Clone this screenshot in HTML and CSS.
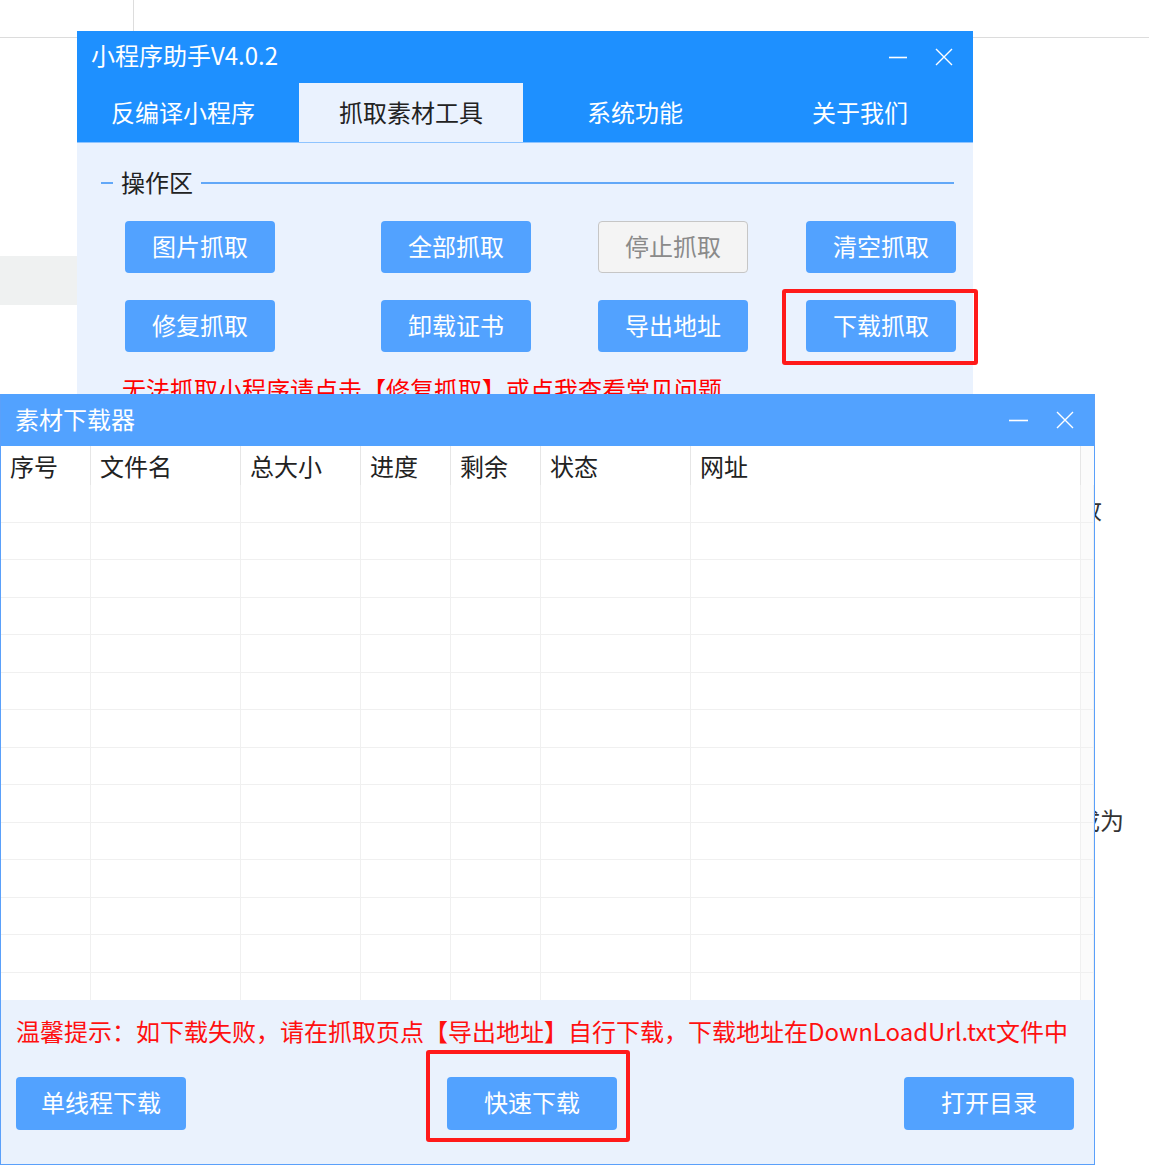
FILE: index.html
```html
<!DOCTYPE html>
<html lang="zh-CN">
<head>
    <meta charset="UTF-8">
    <title>小程序助手V4.0.2</title>
    <meta name="viewport" content="width=device-width, initial-scale=1.0">
    <link rel="stylesheet" href="styles.css">
</head>
<body>
    <!-- page behind the windows -->
    <div class="desk">
        <div class="desk-vline"></div>
        <div class="desk-hline"></div>
        <div class="desk-band"></div>
        <span class="desk-text desk-text-1">收</span>
        <span class="desk-text desk-text-2">成为</span>
    </div>

    <!-- Main window -->
    <div class="main-win">
        <div class="title-bar">
            <span class="title">小程序助手V4.0.2</span>
            <div class="win-ctrl">
                <svg width="18" height="18" viewBox="0 0 18 18"><path d="M0 9.5H18" stroke="#fff" stroke-width="1.6"/></svg>
                <svg width="18" height="18" viewBox="0 0 18 18"><path d="M1 1L17 17M17 1L1 17" stroke="#fff" stroke-width="1.4"/></svg>
            </div>
        </div>
        <div class="tabs">
            <div class="tab">反编译小程序</div>
            <div class="tab active">抓取素材工具</div>
            <div class="tab">系统功能</div>
            <div class="tab">关于我们</div>
        </div>
        <div class="op-area">
            <div class="legend">
                <span class="legend-line short"></span>
                <span class="legend-text">操作区</span>
                <span class="legend-line"></span>
            </div>
            <div class="btn-grid">
                <button class="btn">图片抓取</button>
                <button class="btn">全部抓取</button>
                <button class="btn disabled">停止抓取</button>
                <button class="btn">清空抓取</button>
                <button class="btn">修复抓取</button>
                <button class="btn">卸载证书</button>
                <button class="btn">导出地址</button>
                <button class="btn">下载抓取</button>
            </div>
            <p class="warn">无法抓取小程序请点击【修复抓取】或点我查看常见问题</p>
        </div>
    </div>

    <!-- Downloader window -->
    <div class="dl-win">
        <div class="title-bar light">
            <span class="title">素材下载器</span>
            <div class="win-ctrl">
                <svg width="19" height="18" viewBox="0 0 19 18"><path d="M0 9.5H19" stroke="#fff" stroke-width="1.6"/></svg>
                <svg width="18" height="18" viewBox="0 0 18 18"><path d="M1 1L17 17M17 1L1 17" stroke="#fff" stroke-width="1.4"/></svg>
            </div>
        </div>
        <div class="list">
            <div class="list-row head">
                <div class="cell">序号</div>
                <div class="cell">文件名</div>
                <div class="cell">总大小</div>
                <div class="cell">进度</div>
                <div class="cell">剩余</div>
                <div class="cell">状态</div>
                <div class="cell">网址</div>
                <div class="cell"></div>
            </div>
            <div id="rows"></div>
        </div>
        <div class="dl-foot">
            <p class="tip">温馨提示：如下载失败，请在抓取页点【导出地址】自行下载，下载地址在DownLoadUrl.txt文件中</p>
            <div class="foot-btns">
                <button class="btn big">单线程下载</button>
                <button class="btn big">快速下载</button>
                <button class="btn big">打开目录</button>
            </div>
        </div>
    </div>

    <!-- red marks over the screenshot -->
    <div class="mark mark-1"></div>
    <div class="mark mark-2"></div>

    <script>
        // empty list rows
        var rows = document.getElementById('rows');
        for (var i = 0; i < 14; i++) {
            var row = document.createElement('div');
            row.className = 'list-row';
            for (var j = 0; j < 8; j++) {
                var cell = document.createElement('div');
                cell.className = 'cell';
                row.appendChild(cell);
            }
            rows.appendChild(row);
        }
    </script>
</body>
</html>
```

FILE: styles.css
```css
* {
    box-sizing: border-box;
}
body {
    margin: 0;
    width: 1149px;
    height: 1167px;
    overflow: hidden;
    position: relative;
    background: #fff;
    font-family: "Noto Sans CJK SC", "Microsoft YaHei", sans-serif;
    color: #222;
}
p {
    margin: 0;
}

/* page behind */
.desk-vline {
    position: absolute;
    left: 133px;
    top: 0;
    width: 1px;
    height: 31px;
    background: #ddd;
}
.desk-hline {
    position: absolute;
    left: 0;
    top: 37px;
    width: 1149px;
    height: 1px;
    background: #dcdcdc;
}
.desk-band {
    position: absolute;
    left: 0;
    top: 256px;
    width: 77px;
    height: 49px;
    background: #eff1f1;
}
.desk-text {
    position: absolute;
    font-size: 24px;
    line-height: 30px;
    color: #333;
}
.desk-text-1 {
    left: 1078px;
    top: 494px;
}
.desk-text-2 {
    left: 1076px;
    top: 805px;
}

/* windows */
.main-win {
    position: absolute;
    left: 77px;
    top: 31px;
    width: 896px;
    height: 420px;
    background: #eaf2fe;
}
.title-bar {
    height: 52px;
    display: flex;
    align-items: center;
    padding: 0 20px 0 14px;
    background: #1e90ff;
    color: #fff;
    font-size: 24px;
}
.title {
    margin-top: -5px;
}
.title-bar.light {
    background: #52a2ff;
}
.title-bar.light .title {
    margin-top: -4px;
}
.win-ctrl {
    margin-left: auto;
    display: flex;
    align-items: center;
    gap: 28px;
}
.win-ctrl svg {
    display: block;
}
.tabs {
    display: grid;
    grid-template-columns: 222px 224px 224px 1fr;
    height: 60px;
    background: #1e90ff;
    border-bottom: 1px solid #8ec4ff;
}
.tab {
    display: flex;
    align-items: center;
    justify-content: center;
    padding-bottom: 3px;
    color: #fff;
    font-size: 24px;
}
.tab:first-child {
    padding-right: 10px;
}
.tab.active {
    background: #eaf2fe;
    color: #222;
}

.op-area {
    padding: 27px 19px 0 24px;
}
.legend {
    display: flex;
    align-items: center;
    gap: 8px;
    height: 26px;
}
.legend-line {
    flex: 1;
    height: 1.5px;
    background: #62a8f8;
}
.legend-line.short {
    flex: 0 0 12px;
}
.legend-text {
    font-size: 24px;
    line-height: 26px;
    margin-top: -2px;
    color: #222;
}
.btn-grid {
    display: grid;
    grid-template-columns: 256px 217px 208px 150px;
    grid-auto-rows: 52px;
    row-gap: 27px;
    margin: 25px 0 0 24px;
}
.btn {
    width: 150px;
    height: 52px;
    border: none;
    border-radius: 4px;
    background: #52a2ff;
    color: #fff;
    font-family: inherit;
    font-size: 24px;
    padding: 0 0 4px;
}
.btn.disabled {
    background: #f4f4f4;
    border: 1px solid #c6c6c6;
    color: #8a8a8a;
}
.btn.big {
    width: 170px;
    height: 53px;
}
.warn {
    margin: 21px 0 0 21px;
    font-size: 24px;
    line-height: 32px;
    color: #ff0000;
    white-space: nowrap;
}

.dl-win {
    position: absolute;
    left: 0;
    top: 394px;
    width: 1095px;
    height: 771px;
    display: flex;
    flex-direction: column;
    background: #eaf2fd;
    border: 1px solid #5aa0fa;
    border-top: none;
}
.list {
    height: 554px;
    overflow: hidden;
    background: #fff;
}
.list-row {
    display: grid;
    grid-template-columns: 90px 150px 120px 90px 90px 150px 390px 1fr;
    height: 37.5px;
}
.list-row .cell {
    border-right: 1px solid #f0f0f0;
    border-bottom: 1px solid #f0f0f0;
}
.list-row.head {
    height: 39px;
}
.list-row.head .cell {
    border-bottom: none;
    border-right: 1px solid #e6e6e6;
    padding: 5px 0 0 9px;
    font-size: 24px;
    line-height: 30px;
    color: #222;
}
.list-row.head .cell:last-child {
    border-right: none;
}
.list-row .cell:last-child {
    background: #fbfbfb;
}

.dl-foot {
    flex: 1;
    padding: 15px 19px 0 15px;
}
.tip {
    font-size: 24px;
    line-height: 32px;
    color: #ff1010;
    white-space: nowrap;
}
.foot-btns {
    display: grid;
    grid-template-columns: 431px 457px 170px;
    margin-top: 30px;
}

/* red marks */
.mark {
    position: absolute;
    border: 4px solid #ff1a1a;
    border-radius: 3px;
}
.mark-1 {
    left: 782px;
    top: 289px;
    width: 196px;
    height: 76px;
}
.mark-2 {
    left: 426px;
    top: 1050px;
    width: 204px;
    height: 92px;
}
```
